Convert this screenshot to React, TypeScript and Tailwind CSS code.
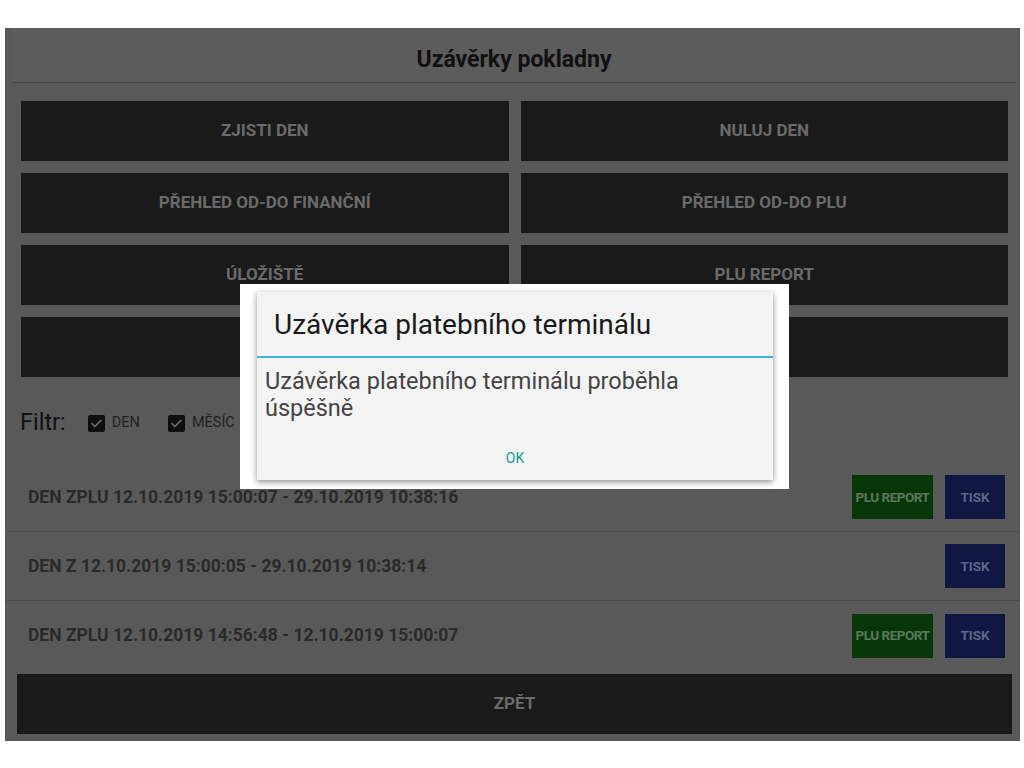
import React from "react";

const font = { fontFamily: "Roboto, 'Noto Sans', sans-serif" };

function Check() {
  return (
    <span className="w-[17px] h-[17px] rounded-[2px] bg-[#0f0f0f] flex items-center justify-center">
      <svg width="13" height="13" viewBox="0 0 24 24" fill="none" stroke="#6a6a6a" strokeWidth="3" strokeLinecap="square">
        <path d="M4 12.5l5 5L20 6.5" />
      </svg>
    </span>
  );
}

function Row({ text, plu, last }: { text: string; plu: boolean; last?: boolean }) {
  return (
    <div className={`h-[69px] flex items-center pl-[23px] pr-[15px] ${last ? "" : "border-b border-[#4d4d4d]"}`}>
      <span className="flex-1 text-[17.5px] font-bold text-[#2a2a2a]">{text}</span>
      {plu && (
        <div className="w-[81px] h-[44px] bg-[#083608] flex items-center justify-center text-[13.5px] font-bold text-[#5a785a] tracking-[-0.5px] mr-[12px] whitespace-nowrap">
          PLU REPORT
        </div>
      )}
      <div className="w-[60px] h-[44px] bg-[#111743] flex items-center justify-center text-[13.5px] font-bold text-[#5e6688]">
        TISK
      </div>
    </div>
  );
}

export default function App() {
  const btn = "h-[60px] bg-[#1a1a1a] flex items-center justify-center text-[17px] font-bold text-[#6a6a6a]";
  return (
    <div className="w-[1024px] h-[768px] bg-white relative" style={font}>
      <div className="absolute left-[5px] top-[28px] w-[1015px] h-[713px] bg-[#595959] flex flex-col">
        <div className="ml-[7px] mr-[4px] h-[55px] bg-[#5c5c5c] border-b border-[#454545] flex items-center justify-center pt-[10px]">
          <span className="text-[23px] font-bold text-[#111]">Uzávěrky pokladny</span>
        </div>
        <div className="grid grid-cols-2 gap-x-[12px] gap-y-[12px] mt-[18px] ml-[16px] mr-[12px]">
          <div className={btn}>ZJISTI DEN</div>
          <div className={btn}>NULUJ DEN</div>
          <div className={btn}>PŘEHLED OD-DO FINANČNÍ</div>
          <div className={btn}>PŘEHLED OD-DO PLU</div>
          <div className={btn}>ÚLOŽIŠTĚ</div>
          <div className={btn}>PLU REPORT</div>
          <div className={btn}></div>
          <div className={btn}></div>
        </div>
        <div className="h-[86px] flex items-center pl-[15px] pt-[6px]">
          <span className="text-[23.5px] text-[#111] mr-[22px]">Filtr:</span>
          <Check />
          <span className="text-[14.5px] text-[#222] ml-[7px] mr-[28px]">DEN</span>
          <Check />
          <span className="text-[14.5px] text-[#222] ml-[7px]">MĚSÍC</span>
        </div>
        <div className="flex flex-col">
          <Row text="DEN ZPLU 12.10.2019 15:00:07 - 29.10.2019 10:38:16" plu />
          <Row text="DEN Z 12.10.2019 15:00:05 - 29.10.2019 10:38:14" plu={false} />
          <Row text="DEN ZPLU 12.10.2019 14:56:48 - 12.10.2019 15:00:07" plu last />
        </div>
        <div className="mt-[4px] ml-[12px] mr-[8px] h-[60px] bg-[#1a1a1a] flex items-center justify-center text-[17px] font-bold text-[#6a6a6a]">
          ZPĚT
        </div>
      </div>

      <div className="absolute left-[240px] top-[284px] w-[549px] h-[205px] bg-white pt-[8px] pl-[17px]">
        <div className="w-[516px] h-[188px] bg-[#f3f3f3] shadow-[0_2px_6px_rgba(0,0,0,0.45)] flex flex-col">
          <div className="h-[66px] flex items-center pl-[17px] pt-[2px] border-b-2 border-[#3fb1dc]">
            <span className="text-[28px] text-[#1a1a1a]">Uzávěrka platebního terminálu</span>
          </div>
          <div className="pl-[8px] pt-[10px] text-[23.5px] leading-[27px] text-[#444]">
            Uzávěrka platebního terminálu proběhla
            <br />
            úspěšně
          </div>
          <div className="flex-1 flex items-center justify-center pt-[14px]">
            <span className="text-[14px] text-[#159a8e]">OK</span>
          </div>
        </div>
      </div>
    </div>
  );
}
